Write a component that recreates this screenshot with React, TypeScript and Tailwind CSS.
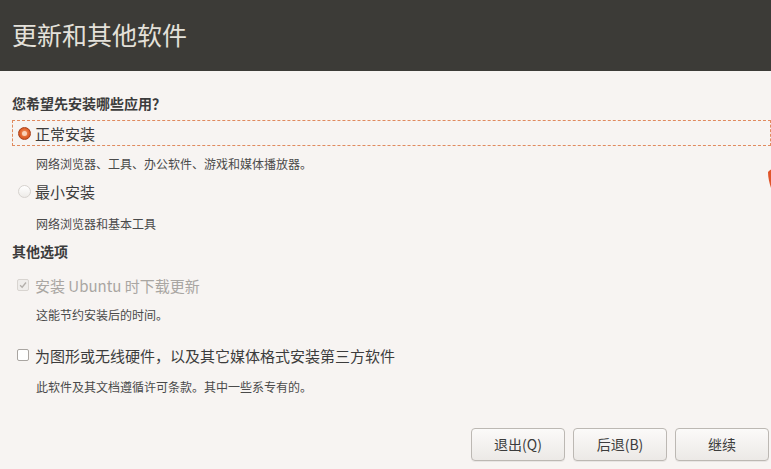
const font = {
  fontFamily: '"Noto Sans CJK SC", "Noto Sans", sans-serif',
};

function Radio({ checked }: { checked: boolean }) {
  if (checked) {
    return (
      <span className="flex h-[13px] w-[13px] items-center justify-center rounded-full border border-[#a8401a] bg-[radial-gradient(circle_at_50%_45%,#f6a06f_0%,#e0622a_55%,#c1461a_100%)]">
        <span className="h-[5px] w-[5px] rounded-full bg-[#f9d2b8]" />
      </span>
    );
  }
  return (
    <span className="h-[13px] w-[13px] rounded-full border border-[#d6d2ce] bg-[linear-gradient(#ffffff,#eeebe8)]" />
  );
}

function Checkbox({ checked, disabled }: { checked: boolean; disabled?: boolean }) {
  return (
    <span
      className={
        "flex h-[12px] w-[12px] items-center justify-center rounded-[2px] border " +
        (disabled ? "border-[#d8d4d0] bg-[#efedeb]" : "border-[#a9a5a1] bg-white")
      }
    >
      {checked && (
        <svg viewBox="0 0 12 12" className="h-[10px] w-[10px]">
          <path d="M2.5 6.2 L5 8.6 L9.6 3" fill="none" stroke="#b3afab" strokeWidth="1.6" />
        </svg>
      )}
    </span>
  );
}

function Button({ label }: { label: string }) {
  return (
    <button className="flex h-[33px] w-[94px] items-center justify-center rounded-[4px] border border-[#bcb8b3] bg-[linear-gradient(#fbfaf9,#ece9e6)] text-[14px] text-[#3c3c3c] shadow-[0_1px_0_rgba(0,0,0,0.06)]">
      {label}
    </button>
  );
}

export default function App() {
  return (
    <div className="relative h-[469px] w-[771px] overflow-hidden bg-[#f7f4f2] text-[#3c3c3c]" style={font}>
      {/* Header */}
      <header className="flex h-[71px] items-center bg-[#3c3b37] pl-[12px] pb-[2px]">
        <h1 className="text-[25px] font-normal leading-none text-[#e4e1da]">更新和其他软件</h1>
      </header>

      <main className="flex flex-col pl-[12px]">
        <h2 className="mt-[22px] h-[20px] text-[14px] font-bold leading-[20px] text-[#3c3c3c]">
          您希望先安装哪些应用？
        </h2>

        {/* Normal install (focused) */}
        <label className="mt-[7px] flex h-[26px] items-center gap-[4px] border border-dashed border-[#e08a5e] pl-[5px]">
          <Radio checked />
          <span className="text-[15px] leading-none">正常安装</span>
        </label>
        <p className="mt-[9px] h-[18px] pl-[24px] text-[12px] leading-[18px] text-[#4a4a4a]">
          网络浏览器、工具、办公软件、游戏和媒体播放器。
        </p>

        <label className="mt-[5px] flex h-[26px] items-center gap-[4px] pl-[6px]">
          <Radio checked={false} />
          <span className="text-[15px] leading-none">最小安装</span>
        </label>
        <p className="mt-[11px] h-[18px] pl-[24px] text-[12px] leading-[18px] text-[#4a4a4a]">
          网络浏览器和基本工具
        </p>

        <h2 className="mt-[8px] h-[20px] text-[14px] font-bold leading-[20px]">其他选项</h2>

        <label className="mt-[11px] flex h-[26px] items-center gap-[6px] pl-[5px]">
          <Checkbox checked disabled />
          <span className="text-[15px] leading-none text-[#a9a6a2]">安装 Ubuntu 时下载更新</span>
        </label>
        <p className="mt-[8px] h-[18px] pl-[24px] text-[12px] leading-[18px] text-[#4a4a4a]">
          这能节约安装后的时间。
        </p>

        <label className="mt-[18px] flex h-[26px] items-center gap-[6px] pl-[5px]">
          <Checkbox checked={false} />
          <span className="text-[15px] leading-none">为图形或无线硬件，以及其它媒体格式安装第三方软件</span>
        </label>
        <p className="mt-[10px] h-[18px] pl-[24px] text-[12px] leading-[18px] text-[#4a4a4a]">
          此软件及其文档遵循许可条款。其中一些系专有的。
        </p>
      </main>

      <footer className="mt-[32px] flex justify-end gap-[8px] pr-[2px]">
        <Button label="退出(Q)" />
        <Button label="后退(B)" />
        <Button label="继续" />
      </footer>

      {/* orange shape peeking in from the right edge */}
      <svg className="absolute left-[765px] top-[168px]" width="8" height="26" viewBox="0 0 8 26">
        <path d="M3 4 C5 2 7 1 8 0 L8 26 C6 20 3 12 3 4 Z" fill="#e0552a" />
      </svg>
    </div>
  );
}
